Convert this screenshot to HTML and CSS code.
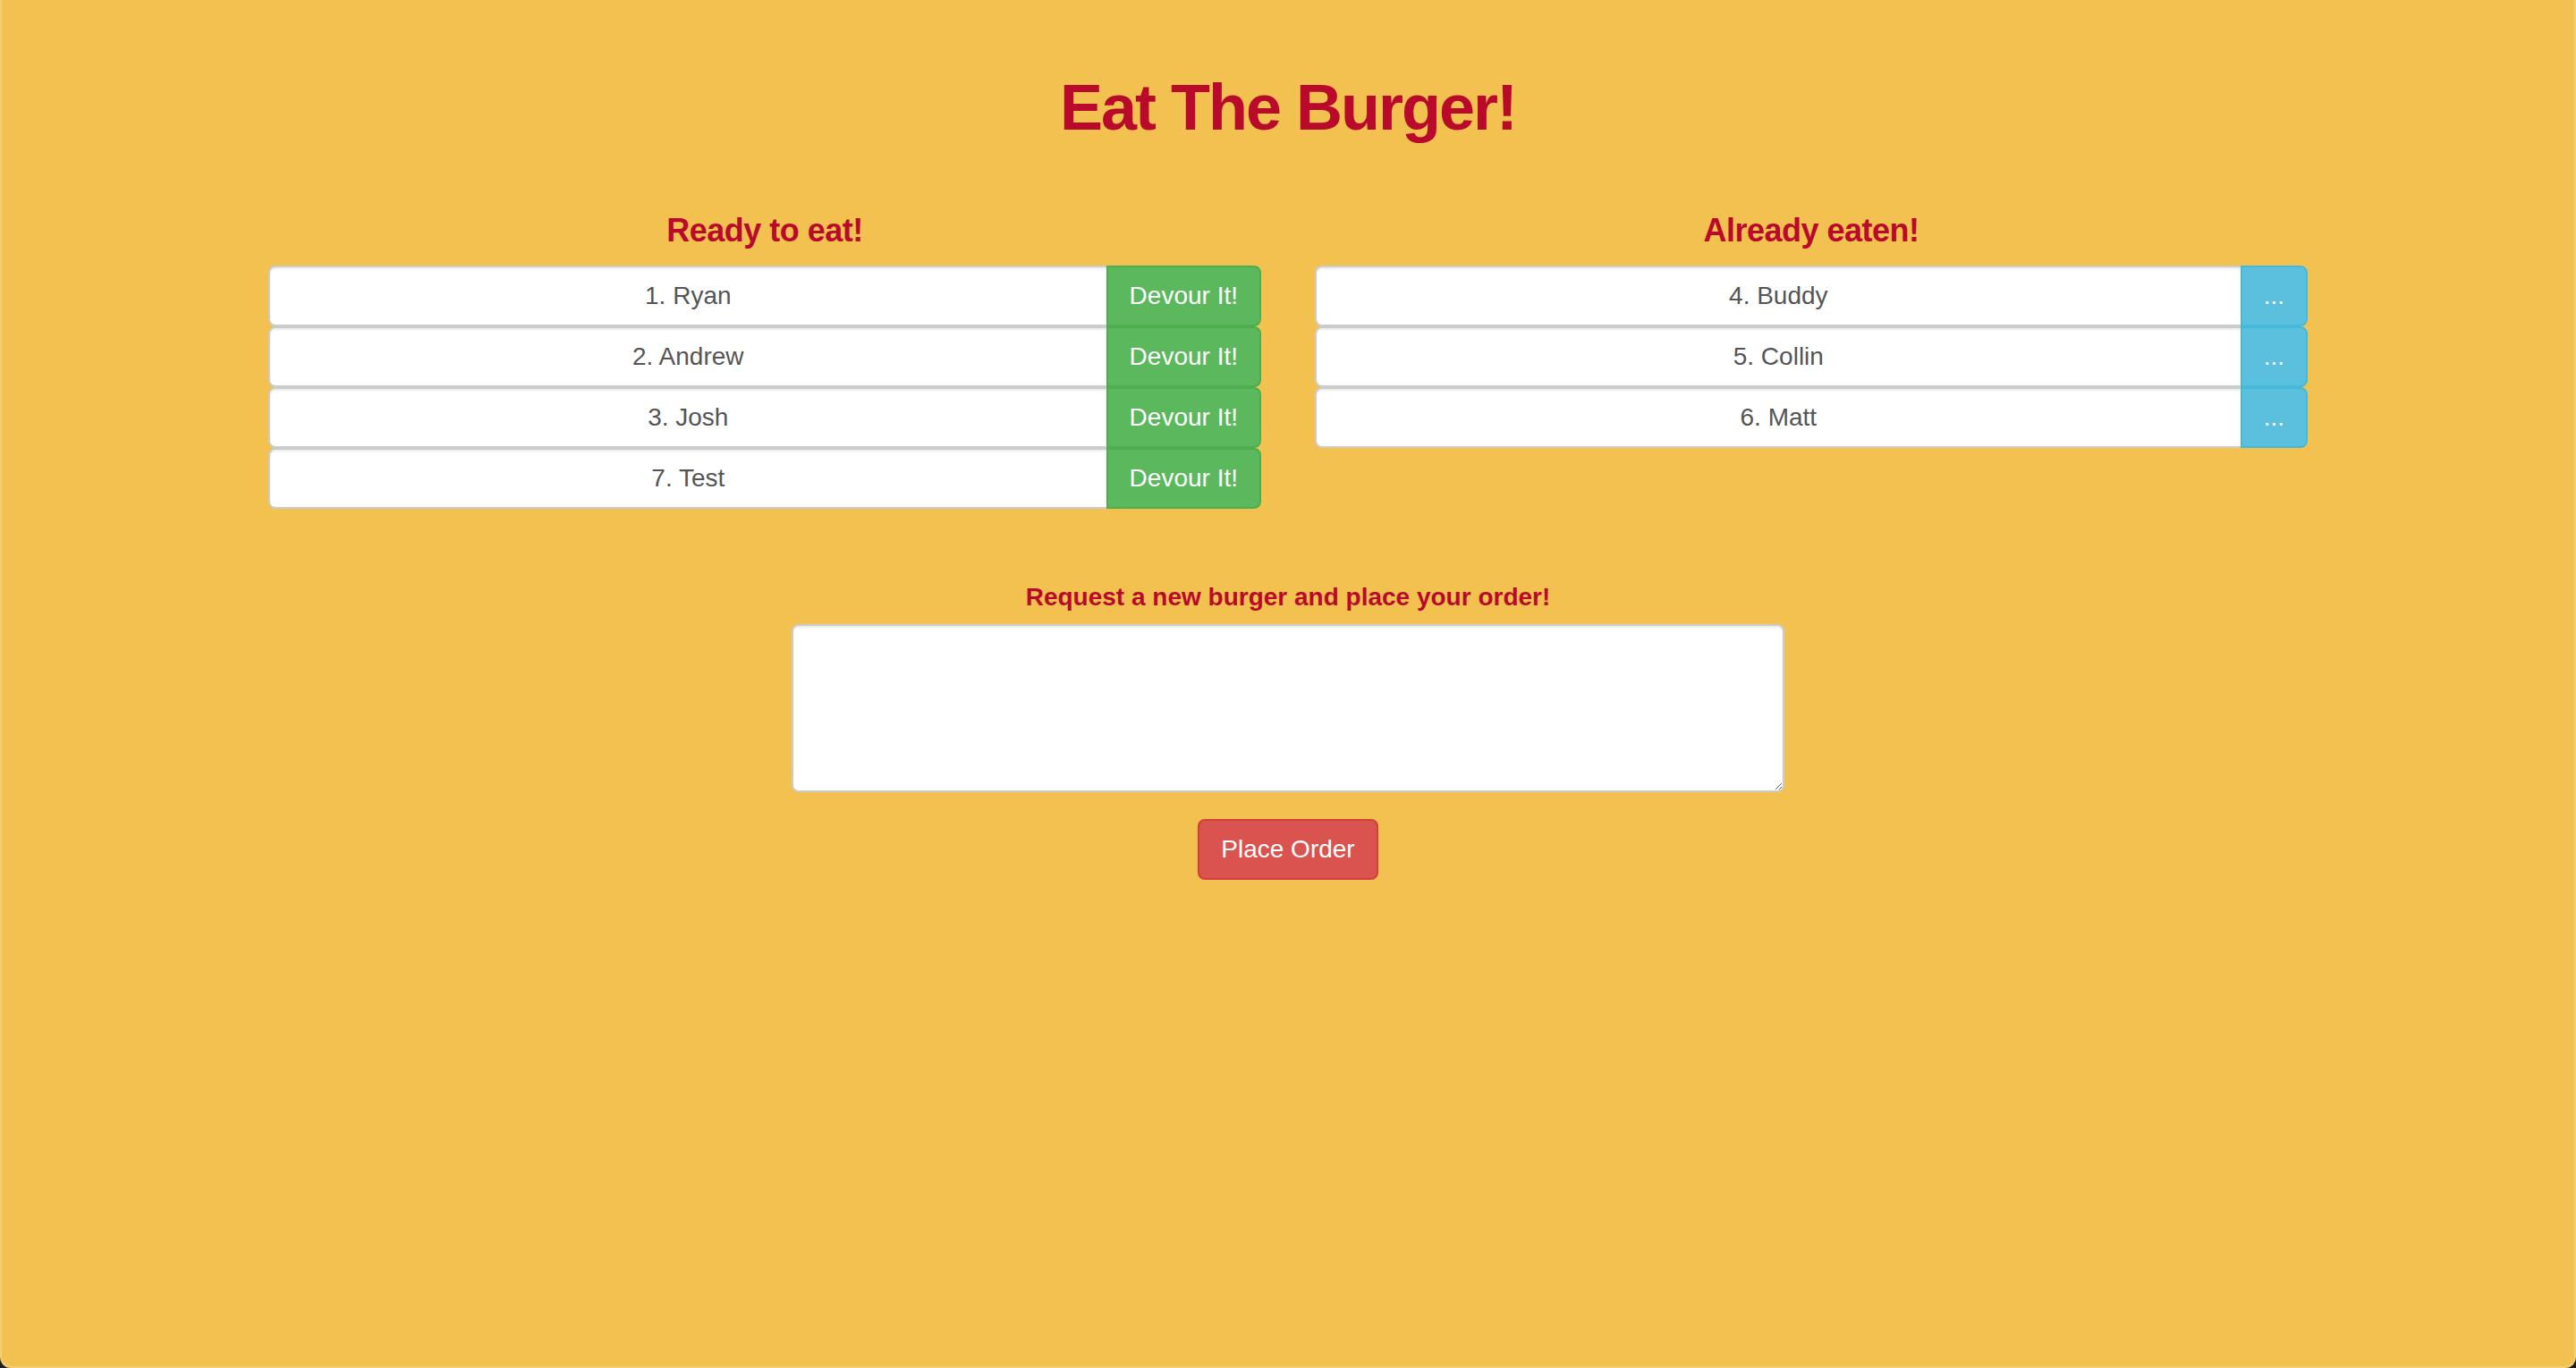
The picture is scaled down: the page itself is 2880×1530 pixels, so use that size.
FILE: index.html
```html
<!DOCTYPE html>
<html lang="en">
<head>
<meta charset="utf-8">
<title>Eat The Burger!</title>
<link rel="stylesheet" href="styles.css">
</head>
<body>
<div class="page">
  <h1 class="title">Eat The Burger!</h1>
  <div class="columns">
    <section class="col">
      <h4 class="col-heading">Ready to eat!</h4>
      <div class="burger-list">
        <div class="burger-row">
          <div class="burger-name">1. Ryan</div>
          <button class="btn btn-success">Devour It!</button>
        </div>
        <div class="burger-row">
          <div class="burger-name">2. Andrew</div>
          <button class="btn btn-success">Devour It!</button>
        </div>
        <div class="burger-row">
          <div class="burger-name">3. Josh</div>
          <button class="btn btn-success">Devour It!</button>
        </div>
        <div class="burger-row">
          <div class="burger-name">7. Test</div>
          <button class="btn btn-success">Devour It!</button>
        </div>
      </div>
    </section>
    <section class="col">
      <h4 class="col-heading">Already eaten!</h4>
      <div class="burger-list">
        <div class="burger-row">
          <div class="burger-name">4. Buddy</div>
          <button class="btn btn-info">...</button>
        </div>
        <div class="burger-row">
          <div class="burger-name">5. Collin</div>
          <button class="btn btn-info">...</button>
        </div>
        <div class="burger-row">
          <div class="burger-name">6. Matt</div>
          <button class="btn btn-info">...</button>
        </div>
      </div>
    </section>
  </div>
  <form class="order">
    <label class="order-label" for="burger">Request a new burger and place your order!</label>
    <textarea id="burger" class="order-input"></textarea>
    <button type="button" class="btn btn-danger">Place Order</button>
  </form>
</div>
</body>
</html>
```

FILE: styles.css
```css
html {
  background: #1e1e1e;
  margin: 0;
  padding: 0;
}

body {
  margin: 0;
  padding: 0;
}

.page {
  box-sizing: border-box;
  min-height: 1530px;
  background: #f2c14f;
  border-left: 2px solid #f5cd72;
  border-right: 2px solid #f5cd72;
  border-bottom: 2px solid #f5cd72;
  border-radius: 0 0 12px 12px;
  font-family: "Liberation Sans", Arial, Helvetica, sans-serif;
  color: #333;
  overflow: hidden;
}

.title {
  margin: 81px 0 0;
  font-size: 72px;
  line-height: 79px;
  font-weight: bold;
  letter-spacing: -2px;
  text-align: center;
  color: #b90a2c;
}

.columns {
  width: 2280px;
  margin: 78px auto 0;
  display: grid;
  grid-template-columns: 1110px 1110px;
  column-gap: 60px;
}

.col-heading {
  margin: 0 0 19px;
  font-size: 36px;
  line-height: 40px;
  font-weight: bold;
  letter-spacing: -0.5px;
  text-align: center;
  color: #b90a2c;
}

.burger-list {
  display: flex;
  flex-direction: column;
}

.burger-row {
  display: flex;
  height: 68px;
}

.burger-name {
  flex: 1;
  box-sizing: border-box;
  height: 68px;
  padding: 12px 24px;
  border: 2px solid #cccccc;
  border-right: none;
  border-radius: 8px 0 0 8px;
  background: #ffffff;
  box-shadow: inset 0 2px 2px rgba(0, 0, 0, 0.075);
  font-size: 28px;
  line-height: 40px;
  color: #555555;
  text-align: center;
}

.btn {
  box-sizing: border-box;
  height: 68px;
  padding: 12px 24px;
  border: 2px solid transparent;
  font-family: "Liberation Sans", Arial, Helvetica, sans-serif;
  font-size: 28px;
  line-height: 40px;
  color: #ffffff;
  cursor: pointer;
  white-space: nowrap;
}

.burger-row .btn {
  border-radius: 0 8px 8px 0;
}

.btn-success {
  background: #5cb85c;
  border-color: #4cae4c;
}

.btn-info {
  background: #5bc0de;
  border-color: #46b8da;
}

.btn-danger {
  background: #d9534f;
  border-color: #d43f3a;
  border-radius: 8px;
}

.order {
  width: 1110px;
  margin: 79px auto 0;
  display: flex;
  flex-direction: column;
  align-items: center;
}

.order-label {
  margin: 0 0 10px;
  font-size: 28px;
  line-height: 40px;
  font-weight: bold;
  color: #b90a2c;
}

.order-input {
  box-sizing: border-box;
  width: 1110px;
  height: 188px;
  margin: 0 0 30px;
  padding: 12px 24px;
  border: 2px solid #cccccc;
  border-radius: 8px;
  background: #ffffff;
  box-shadow: inset 0 2px 2px rgba(0, 0, 0, 0.075);
  font-family: "Liberation Sans", Arial, Helvetica, sans-serif;
  font-size: 28px;
  line-height: 40px;
  color: #555555;
}
```
